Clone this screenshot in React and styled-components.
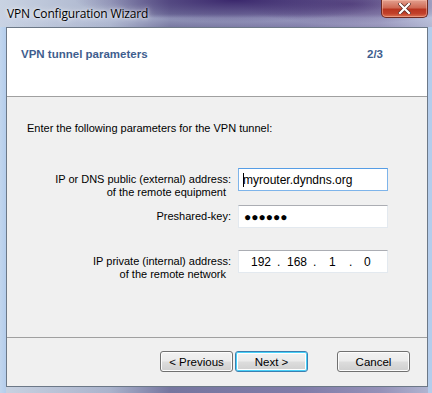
import React from "react";
import styled, { createGlobalStyle } from "styled-components";

const Global = createGlobalStyle`
  html, body { margin: 0; padding: 0; background: #ffffff; }
  body { font-family: "Liberation Sans", Arial, sans-serif; }
`;

const Frame = styled.div`
  width: 432px;
  height: 393px;
  box-sizing: border-box;
  display: flex;
  flex-direction: column;
  background:
    radial-gradient(ellipse 160px 22px at 235px 0px, rgba(55, 35, 105, 0.95), rgba(55, 35, 105, 0) 100%),
    radial-gradient(ellipse 110px 20px at 350px 4px, rgba(85, 65, 125, 0.85), rgba(85, 65, 125, 0) 100%),
    linear-gradient(180deg, rgba(255,255,255,0) 0px, rgba(255,255,255,0) 14px, rgba(200,210,235,0.35) 18px, rgba(190,205,230,0) 28px),
    linear-gradient(90deg, #c9d3e2 0px, #aab3cc 110px, #76769f 170px, #807ca8 300px, #9591b8 380px, #b2b7d2 432px);
  overflow: hidden;
`;

const LowerFrame = styled.div`
  flex: 1;
  display: flex;
  flex-direction: column;
  padding: 0 4px 6px 6px;
  background: linear-gradient(90deg, #c2d6ee 0px, #b4cdec 6px, transparent 6px, transparent 428px, #b4cdec 428px);
`;

const TitleBar = styled.div`
  height: 27px;
  display: flex;
  align-items: flex-start;
  justify-content: space-between;
  padding-left: 7px;
  box-sizing: border-box;
`;

const Title = styled.div`
  font-family: "Open Sans", "Noto Sans", sans-serif;
  font-size: 12px;
  color: #000;
  margin-top: 5px;
  letter-spacing: -0.15px;
  text-shadow: 0 0 6px rgba(255,255,255,0.9), 0 0 3px rgba(255,255,255,0.8);
`;

const CloseButton = styled.div`
  width: 47px;
  height: 18px;
  margin-right: 4px;
  box-sizing: border-box;
  border: 1px solid #6e2a22;
  border-top: none;
  border-radius: 0 0 5px 5px;
  background: linear-gradient(180deg, #e3a08f 0%, #cf6a55 45%, #b93520 55%, #c2412a 80%, #dc7456 100%);
  box-shadow: inset 0 0 0 1px rgba(255, 200, 180, 0.45);
  display: flex;
  align-items: center;
  justify-content: center;
`;

const Client = styled.div`
  flex: 1;
  display: flex;
  flex-direction: column;
  background: #f0f0f0;
  border: 1px solid #6c7887;
`;

const Header = styled.div`
  height: 69px;
  background: #ffffff;
  border-bottom: 1px solid #a0a0a0;
  display: flex;
  justify-content: space-between;
  align-items: flex-start;
  padding: 20px 44px 0 14px;
  box-sizing: border-box;
`;

const HeaderText = styled.div`
  font-weight: bold;
  font-size: 11.5px;
  color: #3f5e8e;
`;

const Body = styled.div`
  flex: 1;
  display: flex;
  flex-direction: column;
  padding: 25px 0 0 20px;
`;

const Intro = styled.div`
  font-size: 11px;
  color: #000;
`;

const Form = styled.div`
  display: grid;
  grid-template-columns: 204px 150px;
  column-gap: 7px;
  align-items: start;
  margin-top: 34px;
`;

const Label = styled.div`
  font-size: 11px;
  color: #000;
  text-align: right;
  line-height: 13px;
  padding-top: 5px;
  margin-top: ${(p) => p.$top || 0}px;
`;

const Sub = styled.span`
  display: block;
  padding-right: 5px;
`;

const Field = styled.div`
  height: 23px;
  box-sizing: border-box;
  background: #fff;
  border: 1px solid ${(p) => (p.$focus ? "#7eb4ea" : "#e3e9ef")};
  border-top-color: ${(p) => (p.$focus ? "#569de5" : "#abadb3")};
  display: flex;
  align-items: center;
  padding-left: ${(p) => p.$pl || 4}px;
  margin-top: ${(p) => p.$top || 0}px;
  font-size: 12px;
  color: #000;
`;

const Caret = styled.span`
  display: inline-block;
  width: 1px;
  height: 14px;
  background: #000;
  margin-right: -1px;
`;

const Dots = styled.span`
  font-size: 12px;
  padding-left: 1px;
`;

const IpSeg = styled.span`
  width: ${(p) => p.$w}px;
  flex: none;
`;

const Footer = styled.div`
  height: 49px;
  border-top: 1px solid #a0a0a0;
  display: flex;
  align-items: flex-start;
  padding: 13px 0 0 153px;
  box-sizing: border-box;
`;

const Button = styled.div`
  width: 73px;
  height: 21px;
  box-sizing: border-box;
  border: 1px solid #707070;
  border-radius: 3px;
  margin-left: ${(p) => p.$ml || 0}px;
  background: linear-gradient(180deg, #f2f2f2 0%, #ebebeb 48%, #dddddd 52%, #cfcfcf 100%);
  box-shadow: inset 0 0 0 1px #fcfcfc;
  display: flex;
  align-items: center;
  justify-content: center;
  font-size: 11.5px;
  color: #000;
`;

const DefaultButton = styled(Button)`
  border-color: #3c7fb1;
  box-shadow: inset 0 0 0 1px #48d0f8, inset 0 0 0 2px #ffffff;
`;

export default function App() {
  return (
    <>
      <Global />
      <Frame>
        <TitleBar>
          <Title>VPN Configuration Wizard</Title>
          <CloseButton>
            <svg width="13" height="11" viewBox="0 0 13 11">
              <path
                d="M2 1 L11 10 M11 1 L2 10"
                stroke="#5a2a24"
                strokeWidth="3.6"
                strokeLinecap="square"
              />
              <path
                d="M2 1 L11 10 M11 1 L2 10"
                stroke="#ffffff"
                strokeWidth="2.2"
                strokeLinecap="square"
              />
            </svg>
          </CloseButton>
        </TitleBar>
        <LowerFrame>
          <Client>
            <Header>
              <HeaderText>VPN tunnel parameters</HeaderText>
              <HeaderText>2/3</HeaderText>
            </Header>
            <Body>
              <Intro>Enter the following parameters for the VPN tunnel:</Intro>
              <Form>
                <Label>
                  IP or DNS public (external) address:
                  <Sub>of the remote equipment</Sub>
                </Label>
                <Field $focus>
                  <Caret />
                  myrouter.dyndns.org
                </Field>
                <Label $top={6}>Preshared-key:</Label>
                <Field $top={6}>
                  <Dots>●●●●●●</Dots>
                </Field>
                <Label $top={22}>
                  IP private (internal) address:
                  <Sub>of the remote network</Sub>
                </Label>
                <Field $top={22} $pl={12}>
                  <IpSeg $w={26}>192</IpSeg>
                  <IpSeg $w={10}>.</IpSeg>
                  <IpSeg $w={26}>168</IpSeg>
                  <IpSeg $w={16}>.</IpSeg>
                  <IpSeg $w={20}>1</IpSeg>
                  <IpSeg $w={15}>.</IpSeg>
                  <IpSeg $w={12}>0</IpSeg>
                </Field>
              </Form>
            </Body>
            <Footer>
              <Button>&lt; Previous</Button>
              <DefaultButton $ml={2}>Next &gt;</DefaultButton>
              <Button $ml={29}>Cancel</Button>
            </Footer>
          </Client>
        </LowerFrame>
      </Frame>
    </>
  );
}
